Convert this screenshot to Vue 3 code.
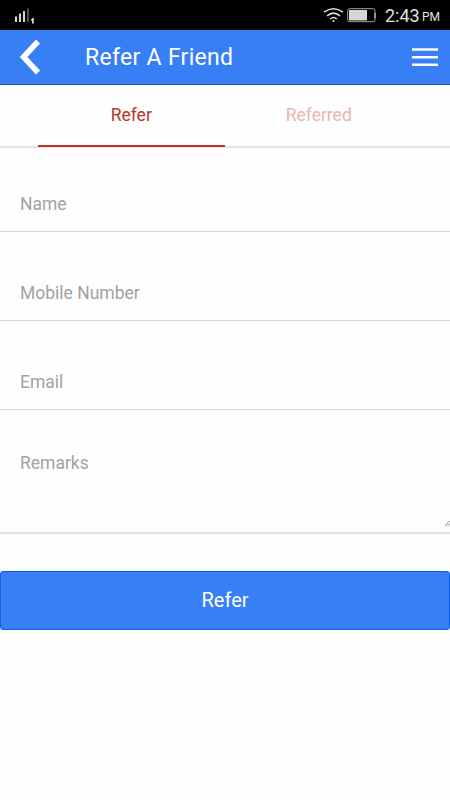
<script setup>
const tabs = [
  { label: 'Refer', active: true },
  { label: 'Referred', active: false },
]
const fields = ['Name', 'Mobile Number', 'Email']
</script>

<template>
  <main class="screen">
    <div class="status">
      <svg class="signal" width="22" height="18" viewBox="0 0 22 18">
        <g stroke-width="2" fill="none" stroke="#d4d4d4">
          <path d="M2 9.500V15M6 6.500V15M10 4v11" />
          <path d="M14 1.500V15" stroke="#505050" />
        </g>
        <path d="M17 13.500v-1l1.500-1.500h1.300v5.500h-1.800v-3z" fill="#d4d4d4" />
      </svg>
      <svg class="wifi" width="21" height="17" viewBox="0 0 21 17">
        <g fill="none" stroke="#dedede" stroke-width="1.500">
          <path d="M1 5.200Q10.500-1.600 20 5.200" />
          <path d="M4 8.800Q10.500 3.400 17 8.800" />
          <path d="M7.200 12Q10.500 9 13.800 12" />
        </g>
        <circle cx="10.500" cy="14" r="1.100" fill="#dedede" />
      </svg>
      <svg class="battery" width="29" height="15" viewBox="0 0 29 15">
        <rect x=".7" y=".7" width="27.300" height="13" rx="1.800" fill="none" stroke="#a0a0a0" stroke-width="1" />
        <path d="M28 5v5" stroke="#e0e0e0" />
        <rect x="2" y="2" width="18" height="10.500" fill="#d6d6d6" />
      </svg>
      <span class="clock">2:43</span><span class="meridiem">PM</span>
    </div>

    <header class="bar">
      <svg class="back" width="22" height="36" viewBox="0 0 22 36">
        <path d="M19 2.500L4.500 18 19 33.500" fill="none" stroke="#fff" stroke-width="5.500" />
      </svg>
      <h1>Refer A Friend</h1>
      <svg class="menu" width="26" height="20" viewBox="0 0 26 20">
        <path d="M0 2.500h26M0 10.200h26M0 17.800h26" stroke="#fff" stroke-width="2.500" />
      </svg>
    </header>

    <nav class="tabs">
      <a v-for="tab in tabs" :key="tab.label" :class="{ active: tab.active }">{{ tab.label }}</a>
    </nav>

    <form>
      <div v-for="field in fields" :key="field" class="field">{{ field }}</div>
      <div class="field remarks">
        Remarks
        <svg class="grip" width="5" height="7" viewBox="0 0 5 7">
          <path d="M0 6L5 .5M2.500 6L5 3.500" stroke="#888" stroke-width="1" />
        </svg>
      </div>
      <button type="button">Refer</button>
    </form>
  </main>
</template>

<style>
body {
  margin: 0;
  background: #fff;
}
</style>

<style scoped>
.screen {
  width: 450px;
  height: 800px;
  overflow: hidden;
  background: #fefefe;
  font-family: Roboto, sans-serif;
}
.status {
  display: flex;
  box-sizing: border-box;
  height: 30px;
  padding: 7px 10px 0 14px;
  background: #000;
  color: #e0e0e0;
}
.signal {
  margin-right: auto;
}
.wifi {
  margin-right: 3px;
}
.battery {
  margin: 1px 9px 0 0;
}
.clock {
  width: 34px;
  font-size: 18px;
  line-height: 18px;
}
.meridiem {
  width: 18px;
  margin-left: 3px;
  font-size: 12px;
  line-height: 21px;
}
.bar {
  display: flex;
  align-items: center;
  box-sizing: border-box;
  height: 55px;
  padding: 0 12px 0 19px;
  border-bottom: 1px solid #1762c4;
  background: #387ef5;
  color: #fff;
}
h1 {
  flex: 1;
  margin: 1px 0 0 44px;
  font-size: 23px;
  font-weight: 400;
  line-height: 54px;
  letter-spacing: 0.3px;
}
.tabs {
  display: flex;
  box-sizing: border-box;
  height: 63px;
  padding: 0 37.500px;
  border-bottom: 2px solid #e4e4e4;
}
.tabs a {
  box-sizing: border-box;
  width: 187.500px;
  height: 62px;
  color: #eab5b0;
  font-size: 17.500px;
  line-height: 61px;
  text-align: center;
}
.tabs .active {
  border-bottom: 2px solid #c33125;
  color: #b9362c;
}
.field {
  box-sizing: border-box;
  height: 89px;
  padding: 50px 20px 0;
  border-bottom: 1px solid #d6d6d6;
  color: #a2a2a2;
  font-size: 17.500px;
  line-height: 22px;
}
.field:first-child {
  height: 84px;
  padding-top: 45px;
}
.remarks {
  display: flex;
  justify-content: space-between;
  height: 124px;
  padding: 42px 0 0 20px;
  border-bottom-width: 2px;
  border-bottom-color: #e2e2e2;
}
.grip {
  align-self: flex-end;
  margin-bottom: 5px;
}
button {
  display: block;
  box-sizing: border-box;
  width: 100%;
  height: 59px;
  margin: 37px 0 0;
  padding: 0;
  border: 1px solid #0c60ee;
  border-radius: 3px;
  background: #387ef5;
  color: #fff;
  font: 400 20px/57px Roboto, sans-serif;
}
</style>
